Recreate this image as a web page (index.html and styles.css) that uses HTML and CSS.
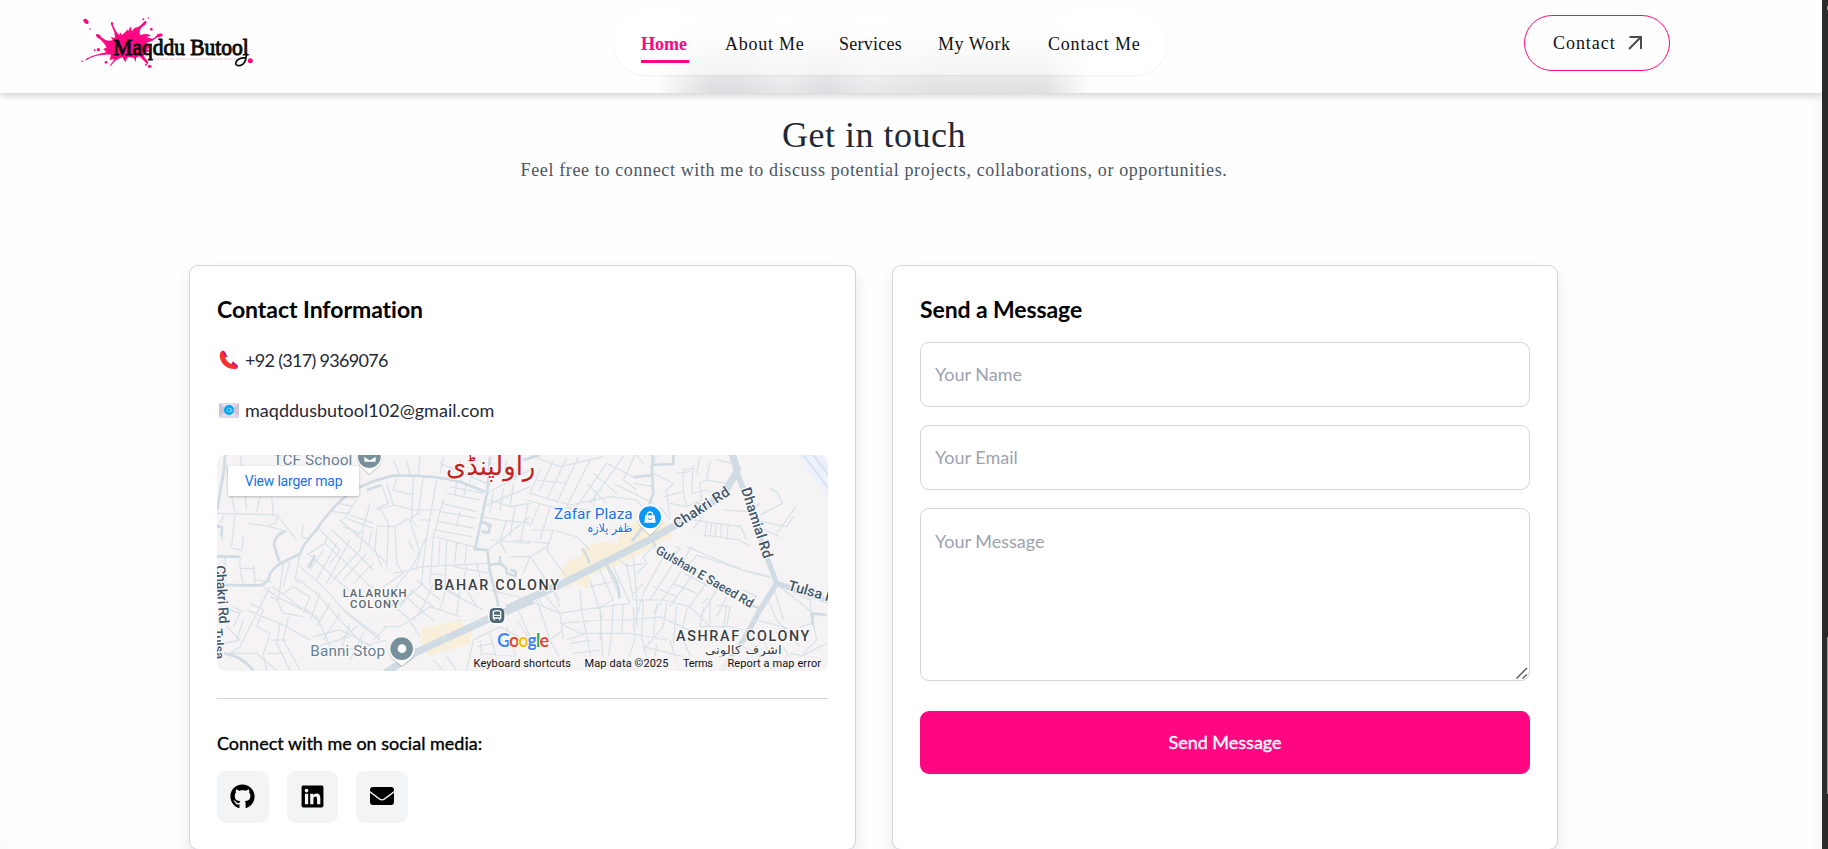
FILE: index.html
```html
<!DOCTYPE html>
<html lang="en">
<head>
<meta charset="utf-8">
<title>Maqddu Butool</title>
<link rel="stylesheet" href="styles.css">
</head>
<body>
<div class="window">
<div class="page">
  <header class="header">
    <a class="logo" href="#">
      <svg width="180" height="60" viewBox="0 0 540 180">
        <g transform="translate(-60 -40)">
          <g fill="#ff0782">
            <path d="M110 103 Q118 101 123 111 Q140 128 158 121 L152 112 L165 115 L163 98 L155 78 Q150 68 156 67 Q161 68 159 77 L170 98 L178 106 L180 98 L186 106 L198 95 L205 88 L203 98 L212 80 L215 95 L225 84 Q240 82 252 66 Q259 61 260 68 Q258 75 246 82 Q234 95 241 106 Q263 99 273 108 L258 112 L276 117 Q285 116 292 104 Q302 99 309 105 Q307 112 292 113 Q279 125 258 130 L276 138 L260 150 L277 151 L255 160 Q245 166 263 185 Q268 192 261 193 Q248 180 238 170 L228 174 L228 188 L221 174 L203 172 L196 188 L187 173 Q166 178 152 200 L150 197 L164 178 L149 181 L153 165 Q105 163 76 183 Q76 176 96 169 Q122 161 139 158 L130 148 L140 143 Q126 120 113 114 Q105 108 110 103Z"/>
            <ellipse cx="78" cy="65" rx="9" ry="6" transform="rotate(45 78 65)"/>
            <circle cx="90" cy="88" r="2.5"/><circle cx="115" cy="150" r="5"/><circle cx="104" cy="152" r="3"/>
            <circle cx="66" cy="185" r="2.5"/><circle cx="138" cy="188" r="4"/><circle cx="269" cy="200" r="5"/>
            <circle cx="258" cy="195" r="3"/><circle cx="250" cy="59" r="3"/><circle cx="265" cy="55" r="2"/>
            <circle cx="274" cy="89" r="4"/><circle cx="571" cy="183" r="7.500"/>
          </g>
          <path d="M272 178H525" stroke="#e2a6bd" stroke-width="2" stroke-dasharray="14 4 8 3"/>
          <text class="logo-text" x="160" y="165" textLength="406" lengthAdjust="spacingAndGlyphs">Maqddu Butool</text>
          <path d="M559 160V168Q557 194 540 198Q524 199 528 187Q536 172 559 175" fill="none" stroke="#0b0b0b" stroke-width="5"/>
        </g>
      </svg>
    </a>
    <nav class="nav">
      <a class="nav-link active" href="#">Home</a>
      <a class="nav-link about" href="#">About Me</a>
      <a class="nav-link services" href="#">Services</a>
      <a class="nav-link work" href="#">My Work</a>
      <a class="nav-link contact" href="#">Contact Me</a>
    </nav>
    <a class="contact-btn" href="#"><span>Contact</span>
      <svg width="14" height="14" viewBox="0 0 14 14" fill="none" stroke="#4b4b4b" stroke-width="2"><path d="M1.500 1H13V13M13 1L1 13"/></svg>
    </a>
  </header>

  <main class="main">
    <h1 class="title">Get in touch</h1>
    <p class="subtitle">Feel free to connect with me to discuss potential projects, collaborations, or opportunities.</p>

    <div class="cards">
      <section class="card">
        <h2 class="card-title info-title">Contact Information</h2>
        <p class="row phone">
          <svg width="20" height="20" viewBox="0 0 20 20"><path d="M1 3Q3 0 5 1L8 6 6 8Q8 12 12 14L14 12 19 16Q19 19 16 19Q8 19 4 14Q0 9 1 3Z" fill="#f8312f"/><path d="M3 1 5 1 8 6 7 7.500ZM14 11.500 19 16 18 17.500 12.700 13Z" fill="#ca0b7e"/></svg>
          <span>+92 (317) 9369076</span>
        </p>
        <p class="row email">
          <svg width="20" height="20" viewBox="0 0 20 20"><rect y="3" width="20" height="15" rx="1" fill="#e1d8ec"/><path d="M0 4 7 10.500 0 17ZM20 4 13 10.500 20 17Z" fill="#cdc4d6"/><path d="M0 4 10 13 20 4" fill="none" stroke="#b4acbc" stroke-width=".8"/><circle cx="10" cy="10" r="5" fill="#00a6ed"/><circle cx="10" cy="10" r="2" fill="none" stroke="#9fe0fa" stroke-width=".8"/><path d="M12 8V11Q13 12 14 10" fill="none" stroke="#9fe0fa" stroke-width=".7"/></svg>
          <span>maqddusbutool102@gmail.com</span>
        </p>

        <div class="map">
        <svg width="611" height="216" viewBox="0 0 611 216">
          <rect width="611" height="216" fill="#f5f3f4"/>
          <!-- western half -->
          <g transform="translate(-17 -15) scale(.33333)">
            <path d="M662 565L690 560 780 538 792 560 818 572 810 610 780 620 690 648 664 610Z" fill="#f7efda"/>
            <g class="lane">
              <path d="M80 75L95 170 105 215M120 45L140 210M50 220L230 225 290 300M75 220L60 250M145 250L210 260 260 275M95 325L125 330 130 290M105 220L95 320M50 350H120V385H165M75 350V430M120 385L130 430M160 375L165 430M50 260L68 262 66 300M165 420L215 425M250 370L235 480 210 470M300 340L285 420 300 430M270 365L250 440"/>
              <path d="M180 170L170 215M215 170L220 225M235 225L225 250 205 255M310 255L305 290 330 300M355 265L380 290 375 310 320 345M380 290L420 330 390 370M395 270L460 330 520 390M420 240L500 310 560 370M375 310L450 380 500 430 545 465M330 345L400 410 470 470M300 380L370 440 440 520 540 600M290 415L350 460 420 540 500 625M345 350L320 385M370 330L330 390M410 310L350 420M450 300L380 430M480 330L400 420M500 340L430 420M520 370L460 430M440 235L520 265M430 260L480 280M450 225L520 250M510 190L490 265 470 290M530 265L525 330 545 380M490 270L480 330M540 205L565 250 560 390M530 210L585 195M530 258L585 260 625 235M585 260L590 370 610 400 550 440M515 270L505 320M470 180L430 240M395 215L450 220M415 190L460 200"/>
              <path d="M545 135L565 190 530 205M560 130L580 195M590 110L580 150 640 165M640 110L635 240M670 110L655 220 625 240M710 120L680 290 640 375 590 440 560 480M730 180L700 290 860 330M725 190L830 215M740 160L840 180M750 140L850 160M770 120L765 170M725 215L830 235M715 245L825 265M705 270L815 290M800 130L790 175M780 215L770 260M630 240L660 340 650 380M625 300L640 330M680 290L670 370 665 430M700 290L690 430M720 300L715 375M740 300L735 440M770 305L765 370M800 315L795 370M580 400L670 380 870 370M660 240L690 240M585 195L640 210 720 210M635 240L650 260M865 330L990 230M840 230L900 240 990 250M860 250L870 275M870 300L990 310M895 300L920 340M920 240L900 300M945 200L930 290M985 190L960 310M850 200L990 140M860 160L990 90M870 180L930 200 990 190M880 155L870 220M910 145L900 210M940 130L930 200M880 70L865 145M920 60L910 110M960 50L945 120M720 70L860 130M730 50L720 100M780 60L770 110M820 60L810 130M620 60L630 105M660 50L655 105M580 60L600 105"/>
              <path d="M210 440L180 500 120 620 90 640M190 440L230 470 350 530 400 640M140 510L240 550 330 600M130 540L110 600M150 490L190 510 170 560 210 580 190 640 200 692M215 440L260 470 310 510M250 460L280 440 330 470M230 480L250 520 310 530M240 550L230 610 270 692M265 530L250 600 300 690M310 500L350 540M330 470L310 520M360 460L330 540M390 490L350 560M420 520L370 600M450 550L420 640M490 580L450 660M340 590L420 570 520 620M350 620L450 590M400 640L560 600M550 560L600 560 690 500 780 530M520 600L560 560M560 480L620 530 660 590M590 440L650 500 700 540M560 500L600 490 670 430M630 450L700 500M650 420L720 480M640 450L600 500M700 430L670 500 640 540M740 440L720 510M735 450L850 510M780 450L770 520M760 380L870 400M690 400L735 405M800 370L790 430M830 370L850 450M430 510L540 590M420 600L470 560M100 500L130 515M60 500L120 520 100 560M80 560L120 600 70 610M210 600L260 600M200 640L250 640M90 640L170 640 230 692M800 692L820 600 900 560M840 600L850 692M870 580L890 660M920 560L960 692M950 540L990 600M900 560L970 600M700 660L730 692M740 650L770 692M730 440L780 470M800 450L830 500M870 450L990 480M850 640L950 650M830 620L880 610"/>
            </g>
            <g class="street">
              <path d="M75 45L72 90 60 160 52 210M855 155L780 125Q690 103 580 107Q480 130 430 175 385 215 345 275 310 310 300 342Q240 370 230 378 205 400 207 415 195 436 175 436L75 435M255 275Q224 283 222 315L238 365M862 155L825 328 862 330 870 395 896 500M50 258L66 262 64 290M50 350H118M345 345L328 382M868 375L900 370 920 385 920 400 945 408M900 348V372M845 245L872 255 866 278 845 275M72 640Q130 650 160 692M870 50L862 155M545 135L500 150"/>
            </g>
            <path d="M555 700L650 636L880 530L1000 480" class="highway" />
          </g>
          <!-- eastern half -->
          <g transform="translate(293 -15) scale(.33333)">
            <path d="M147 400L180 358 212 350 218 325 275 305 320 310 335 275 400 220 450 240 478 258 485 295 440 310 400 335 310 380 240 405 235 445 190 430 170 447Z" fill="#f7efda"/>
            <path d="M858 40L960 178V40Z" fill="#edf1fb"/><path d="M905 40L960 110M880 45L960 150" stroke="#d5def2" stroke-width="5"/><path d="M930 40H960V80Z" fill="#f5f3f4"/>
            <g class="lane">
              <path d="M60 45L150 80 280 50M90 90L60 160M130 60L90 150M170 55L110 180M205 50L140 190M240 60L170 200M290 70L200 200M340 50L240 190M60 160L180 195 300 170M80 120L170 130M50 180L120 200 90 300M90 190L60 260M120 200L240 210M130 270L200 290 240 330M60 270L130 270 110 330M230 130L290 190M250 100L320 160M290 70L370 110M310 130L430 190M260 150L250 200M300 170L380 180 410 215M380 45L400 70M430 140L370 130M375 45L340 120 380 150M380 110L420 105M440 45L430 75M430 100L490 130 460 160M460 170L520 155 530 200 480 190M450 200L480 240M470 155L480 235M520 155L520 90 550 85M550 75L545 160 590 150M570 50L560 100M600 65L590 120 650 130M500 100L540 95M620 60L670 70M590 120L570 130 575 180 530 200M580 150L640 165M600 190L560 190 570 230"/>
              <path d="M550 240L690 260M590 245L585 290M605 250L600 285M620 250L615 290M635 250L632 292M655 255L650 300M580 285L690 300 720 320M690 255L710 300M550 265L580 230M640 210L720 215 750 190M700 180L740 200M780 145L800 155 818 190 750 225M730 240L830 260M740 260L810 290M858 200L800 280M850 230L830 260M530 320L600 350 700 390 780 410M560 345L730 400 780 412M560 345L530 385 570 400M545 320L515 370M495 320L510 325 490 350 430 320M430 320L400 350 410 370 380 400M460 350L400 460 370 560M490 370L420 480M520 385L430 520M550 400L480 500M590 430L530 510M620 450L570 530M650 470L620 530M520 400L600 440M370 350L380 480 380 560M350 370L370 480 460 480 540 500 600 560M330 360L350 380 400 370M310 380L360 490M270 390L310 480 270 500M240 420L275 530 270 600M290 380L330 470M240 440L330 420M210 450L215 510 250 692M150 520L210 510 360 490M150 550L280 540 370 540 450 530 560 580M210 580L360 580 470 600M270 500L280 690M310 490L305 580 290 692M340 490L335 580M370 500L375 600 340 692M400 480L395 590 420 692M440 490L430 590M470 490L460 560 400 630M500 500L490 610M530 510L510 600M400 430L370 460M430 440L500 470M490 430L560 460M80 460L100 500M50 480L150 520M100 460L150 520 160 600M20 500L60 590M80 480L120 600 170 692M130 450L150 500M60 350L150 480M110 330L170 410M10 300L120 310M0 350L60 350 110 320M60 350L40 400M580 490L590 475 600 480V550M620 500L630 495 660 500 650 560M650 495L640 570M580 500L570 560 660 560 700 570M700 450L740 470 720 500M770 470L800 540 870 620M790 440L820 540M810 440L910 520 910 550M840 450L900 480M740 540L850 570M900 450L905 550M910 520L950 525M870 560L910 550 920 600 880 640M760 600L800 692M870 650L950 610M820 620L860 692M840 640L950 660M700 620L760 650M400 620L560 660M440 610L430 692M480 600L510 692M520 600L560 692M170 600L230 580M160 570L120 600M150 550L210 580M180 610L250 600M190 640L270 630"/>
            </g>
            <g class="street"><path d="M428 45V75L490 72V45M425 75L430 160 415 200M370 112L428 105M215 325Q230 340 238 370M290 375Q330 430 328 475M365 305L400 260M700 490L750 505M0 390Q25 390 15 410M910 555L905 520 950 525M430 300L435 320M40 60L90 45" /></g>
            <path d="M678 90L720 200 770 350 800 430 750 510 700 600 630 700M800 430L960 485" class="highway side"/>
            <path d="M-10 506L150 434 410 304 480 265Q620 190 650 145 690 85 680 85L665 35" class="highway"/>
          </g>
          <path d="M0 165.500H611M227.500 0V216" stroke="#e9ecee" stroke-width=".5"/>

          <g class="place" transform="translate(-17 -15) scale(.33333)">
            <text x="220" y="75" textLength="237" font-size="46">TCF School</text>
            <text x="331" y="648" textLength="224" font-size="46">Banni Stop</text>
            <text class="city" x="738" y="105" textLength="268" lengthAdjust="spacingAndGlyphs" font-size="82">راولپنڈی</text>
            <text class="district" x="702" y="450" textLength="375" font-size="43">BAHAR COLONY</text>
            <text class="district small" x="428" y="471" textLength="192" font-size="34">LALARUKH</text>
            <text class="district small" x="450" y="504" textLength="147" font-size="34">COLONY</text>
            <text class="road" transform="translate(46 377) rotate(86)" textLength="175" font-size="42">Chakri Rd</text>
            <text class="road" transform="translate(40 566) rotate(86)" font-size="38">Tulsa</text>
            <path d="M472 52a36 36 0 0 0 14 31L508 103 530 83a36 36 0 0 0 15-31z" class="pin"/>
            <circle cx="508" cy="50" r="34" fill="#78909c"/>
            <path d="M493 50V65H527V50L509 61Z" fill="#fff"/><path d="M496 51L509 59 525 50" fill="none" stroke="#78909c" stroke-width="3"/>
            <path d="M605 588a40 40 0 0 0-27 68L606 678 633 656a40 40 0 0 0-28-68z" class="pin"/>
            <circle cx="605" cy="626" r="34" fill="#78909c"/><circle cx="606" cy="626" r="13" fill="#fff"/>
            <circle cx="891" cy="529" r="27" fill="#fff"/><rect x="869" y="504" width="44" height="45" rx="14" fill="#4f6878"/>
            <path d="M880 515Q891 509 902 515V534H880Z" fill="none" stroke="#fff" stroke-width="4"/><path d="M880 526H902M883 535V541M899 535V541" stroke="#fff" stroke-width="4"/>
          </g>
          <g class="place" transform="translate(293 -15) scale(.33333)">
            <text class="poi" x="132" y="237" textLength="236" font-size="46">Zafar Plaza</text>
            <text class="poi arabic" x="230" y="276" textLength="137" lengthAdjust="spacingAndGlyphs" font-size="36">ظفر پلازہ</text>
            <text class="district" x="498" y="602" textLength="400" font-size="43">ASHRAF COLONY</text>
            <text class="district arabic" x="585" y="641" textLength="230" lengthAdjust="spacingAndGlyphs" font-size="36">اشرف کالونی</text>
            <text class="road" transform="translate(502 267) rotate(-33)" textLength="191" font-size="43">Chakri Rd</text>
            <text class="road" transform="translate(693 148) rotate(72)" textLength="220" font-size="43">Dhamial Rd</text>
            <text class="road" transform="translate(434 338) rotate(30)" textLength="332" font-size="38">Gulshan E Saeed Rd</text>
            <text class="road" transform="translate(832 449) rotate(16)" font-size="43">Tulsa Rd</text>
            <path d="M420 193a39 39 0 0 0-28 66L420 285 448 259a39 39 0 0 0-28-66z" class="pin"/>
            <circle cx="420" cy="232" r="33" fill="#0b98f5"/>
            <path d="M406 226H434L437 248H403Z" fill="#fff"/><path d="M412 226V221Q420 211 428 221V226" fill="none" stroke="#fff" stroke-width="4"/><path d="M413 235Q420 243 427 235" fill="none" stroke="#0b98f5" stroke-width="3"/>
          </g>
          <rect x="254" y="201" width="357" height="15" fill="#f5f3f4" opacity=".75"/>
          <text class="google" x="280" y="191.500" textLength="52"><tspan fill="#4285f4">G</tspan><tspan fill="#ea4335">o</tspan><tspan fill="#fbbc04">o</tspan><tspan fill="#4285f4">g</tspan><tspan fill="#34a853">l</tspan><tspan fill="#ea4335">e</tspan></text>
          <g class="legal">
            <text x="256.500" y="212" textLength="97.500">Keyboard shortcuts</text>
            <text x="367.500" y="212" textLength="84">Map data ©2025</text>
            <text x="466" y="212" textLength="30">Terms</text>
            <text x="510.500" y="212" textLength="93.500">Report a map error</text>
          </g>
        </svg>
        <a class="larger" href="#">View larger map</a>
        </div>

        <hr class="rule">
        <h3 class="social-title">Connect with me on social media:</h3>
        <div class="socials">
          <a class="social" href="#" aria-label="GitHub"><svg width="25" height="25" viewBox="0 0 496 512"><path d="M165.900 397.400c0 2-2.300 3.600-5.200 3.600-3.300.3-5.600-1.300-5.600-3.600 0-2 2.300-3.600 5.200-3.600 3-.3 5.600 1.300 5.600 3.600zM244.800 8C106.100 8 0 113.300 0 252c0 110.900 69.800 205.800 169.500 239.200 12.800 2.300 17.300-5.600 17.300-12.100 0-6.200-.3-40.400-.3-61.400 0 0-70 15-84.700-29.800 0 0-11.400-29.100-27.800-36.600 0 0-22.900-15.700 1.600-15.400 0 0 24.900 2 38.600 25.800 21.900 38.600 58.600 27.500 72.900 20.900 2.300-16 8.800-27.100 16-33.700-55.900-6.200-112.300-14.300-112.300-110.500 0-27.500 7.600-41.300 23.600-58.900-2.600-6.500-11.100-33.300 2.600-67.900 20.900-6.500 69 27 69 27 20-5.600 41.500-8.500 62.800-8.500s42.800 2.900 62.800 8.500c0 0 48.100-33.600 69-27 13.700 34.700 5.200 61.400 2.600 67.900 16 17.700 25.800 31.500 25.800 58.900 0 96.500-58.900 104.200-114.800 110.500 9.200 7.900 17 22.900 17 46.400 0 33.700-.3 75.400-.3 83.600 0 6.500 4.600 14.400 17.300 12.100C428.200 457.800 496 362.900 496 252 496 113.300 383.500 8 244.800 8z"/></svg></a>
          <a class="social" href="#" aria-label="LinkedIn"><svg width="25" height="25" viewBox="0 0 448 512"><path d="M416 32H31.900C14.300 32 0 46.500 0 64.300v383.400C0 465.500 14.300 480 31.900 480H416c17.600 0 32-14.500 32-32.300V64.300c0-17.800-14.400-32.300-32-32.300zM135.400 416H69V202.200h66.500V416zm-33.200-243c-21.300 0-38.500-17.300-38.500-38.500S80.900 96 102.200 96c21.200 0 38.500 17.300 38.500 38.500 0 21.300-17.200 38.500-38.500 38.500zm282.100 243h-66.400V312c0-24.800-.5-56.700-34.500-56.700-34.600 0-39.900 27-39.900 54.900V416h-66.400V202.200h63.700v29.200h.9c8.900-16.800 30.600-34.500 62.900-34.500 67.200 0 79.700 44.300 79.700 101.900V416z"/></svg></a>
          <a class="social" href="#" aria-label="Email"><svg width="24" height="24" viewBox="0 0 24 24"><path d="M3 3H21Q24 3 24 6V7L14 14.500Q12 15.800 10 14.500L0 7V6Q0 3 3 3ZM0 8.700L9 15.600Q12 17.600 15 15.600L24 8.700V18Q24 21 21 21H3Q0 21 0 18Z"/></svg></a>
        </div>
      </section>

      <section class="card">
        <h2 class="card-title send-title">Send a Message</h2>
        <form class="form">
          <input class="field name" type="text" placeholder="Your Name">
          <input class="field mail" type="text" placeholder="Your Email">
          <div class="area">
            <textarea class="field message" placeholder="Your Message"></textarea>
            <svg class="grip" width="12" height="12" viewBox="0 0 12 12" stroke="#555" stroke-width="1.400"><path d="M.5 11.500L11 1M6.500 11.500L11 7.500"/></svg>
          </div>
          <button class="send" type="button">Send Message</button>
        </form>
      </section>
    </div>
  </main>
</div>
<div class="edge"></div>
</div>
</body>
</html>
```
FILE: styles.css
```css
* { box-sizing: border-box; }
body {
  margin: 0;
  height: 849px;
  overflow: hidden;
  background: #fefefe;
  font-family: Lato, "Open Sans", sans-serif;
  font-variant-ligatures: none;
}
a { color: inherit; text-decoration: none; }
h1, h2, h3, p { margin: 0; font-weight: 400; }

.window { display: flex; height: 849px; overflow: hidden; }
.page {
  width: 1822px;
  height: 849px;
  overflow: hidden;
  background:
    radial-gradient(circle at -30px 870px, #f6f6f6 0, #fefefe 58px, transparent 60px),
    linear-gradient(90deg, transparent 1808px, #f9f9f9 1822px);
}
.edge {
  width: 6px;
  background:
    linear-gradient(#9a9a9a, #9a9a9a) 5px 637px / 1px 157px no-repeat,
    linear-gradient(#aaa, #aaa) 5px 6px / 1px 4px no-repeat,
    #2b2b2b;
}

.header {
  display: flex;
  align-items: flex-start;
  width: 1822px;
  height: 93px;
  padding-left: 80px;
  background:
    linear-gradient(#fefefe 5px, rgba(254, 254, 254, .94) 35px, rgba(254, 254, 254, 0) 90px),
    linear-gradient(90deg, transparent 655px, #dcdde0 712px, #dcdde0 732px, #e8e9eb 785px, #dddee1 825px, #e9eaec 870px, #e1e2e4 930px, #e0e1e3 1045px, transparent 1092px),
    #fefefe;
  box-shadow: 0 2px 8px rgba(0, 0, 0, .2);
}
.logo { display: block; width: 180px; height: 60px; margin: 13px 354px 0 0; }
.logo svg { display: block; }
.logo-text { font: 70px "Liberation Serif", serif; fill: #0b0b0b; stroke: #0b0b0b; stroke-width: 3; }

.nav {
  display: flex;
  width: 553px;
  height: 63px;
  margin-top: 12px;
  padding: 15px 0 0 27px;
  gap: 36px;
  border-radius: 32px;
  background: rgba(255, 255, 255, .5);
  box-shadow: 0 1px 2px rgba(0, 0, 0, .06);
  font: 18px/34px "Liberation Serif", serif;
  color: #111;
  white-space: nowrap;
}
.nav-link { height: 36px; }
.active { width: 48px; font-weight: 700; color: #ff0782; border-bottom: 3px solid #ff0782; letter-spacing: 0; }
.about { width: 78px; letter-spacing: .75px; }
.services { width: 63px; letter-spacing: .25px; }
.work { width: 74px; letter-spacing: .55px; }
.contact { width: 95px; letter-spacing: .8px; }

.contact-btn {
  display: flex;
  align-items: center;
  justify-content: space-between;
  width: 146px;
  height: 56px;
  margin: 15px 0 0 357px;
  padding: 0 27px 0 28px;
  border: 1px solid #ff0782;
  border-radius: 28px;
  font: 18px "Liberation Serif", serif;
  letter-spacing: .95px;
  color: #111;
}

.main { width: 1748px; text-align: center; }
.title {
  margin-top: 22px;
  font: 36px/40px "Liberation Serif", serif;
  letter-spacing: .5px;
  color: #1f2937;
}
.subtitle {
  margin-top: 1px;
  font: 18px/28px "Liberation Serif", serif;
  letter-spacing: .63px;
  color: #4b5563;
}

.cards {
  display: grid;
  grid-template-columns: 667px 666px;
  gap: 36px;
  margin: 81px 0 0 189px;
  text-align: left;
}
.card {
  height: 585px;
  padding: 25px 27px;
  border: 1px solid #d1d5db;
  border-radius: 9px;
  background: #fff;
  box-shadow: 0 8px 16px rgba(0, 0, 0, .09);
}
.card-title { font-size: 23px; line-height: 36px; font-weight: 700; color: #000; }
.info-title { letter-spacing: -.05px; }
.send-title { letter-spacing: -.1px; }
.row {
  display: flex;
  align-items: center;
  gap: 6px;
  height: 32px;
  padding-left: 2px;
  font-size: 18px;
  color: #1f2937;
  white-space: nowrap;
}
.phone { margin-top: 17px; letter-spacing: -.7px; }
.email { margin-top: 18px; letter-spacing: .02px; }

.map {
  position: relative;
  width: 611px;
  height: 216px;
  margin-top: 29px;
  border-radius: 8px;
  overflow: hidden;
}
.map svg { display: block; }
.larger {
  position: absolute;
  left: 11px;
  top: 11px;
  width: 131px;
  height: 30px;
  border-radius: 2px;
  background: #fff;
  box-shadow: 0 1px 3px rgba(0, 0, 0, .25);
  font: 14px/30px Roboto, sans-serif;
  letter-spacing: -.2px;
  text-align: center;
  color: #1a73e8;
}
.lane { fill: none; stroke: #d7e1e8; stroke-width: 3.6; }
.street { fill: none; stroke: #d0dbe3; stroke-width: 8; stroke-linejoin: round; }
.highway { fill: none; stroke: #d0dbe3; stroke-width: 22; stroke-linejoin: round; }
.side { stroke-width: 16; }
.place { font-family: Roboto, "DejaVu Sans", sans-serif; fill: #668091; }
.place text { paint-order: stroke; stroke: #fbfafa; stroke-width: 7; stroke-linejoin: round; }
.place .city { fill: #c5221f; font-family: "DejaVu Sans", sans-serif; }
.place .arabic { font-family: "DejaVu Sans", sans-serif; }
.place .district { fill: #3c4043; font-weight: 500; }
.place .small { fill: #5c666d; }
.place .road { fill: #42566a; font-weight: 500; }
.place .poi { fill: #1a73e8; }
.pin { fill: #fff; filter: drop-shadow(0 2px 2px rgba(0, 0, 0, .3)); }
.google { font: 700 18px Lato, sans-serif; paint-order: stroke; stroke: #fff; stroke-width: 2; }
.legal { font: 11px Roboto, sans-serif; fill: #111; }

.rule { height: 1px; margin: 27px 0 0; border: 0; background: #d1d5db; }
.social-title {
  margin-top: 30px;
  font-size: 18px;
  line-height: 28px;
  color: #000;
  -webkit-text-stroke: .35px #000;
}
.socials { display: flex; gap: 18px; margin-top: 14px; }
.social {
  display: flex;
  align-items: center;
  justify-content: center;
  width: 51.5px;
  height: 52px;
  padding-bottom: 2px;
  border-radius: 9px;
  background: #f3f4f6;
}

.form { display: flex; flex-direction: column; margin-top: 15px; }
.field {
  display: block;
  width: 610px;
  height: 65px;
  margin: 0 0 18px;
  padding: 0 14px 1px;
  border: 1px solid #d1d5db;
  border-radius: 9px;
  background: #fff;
  font: 18px/28px Lato, sans-serif;
  outline: 0;
}
.field::placeholder { color: #9ca3af; opacity: 1; }
.area { position: relative; width: 610px; height: 173px; }
.message { height: 173px; margin: 0; padding: 18px 14px; resize: none; }
.grip { position: absolute; right: 2px; bottom: 2px; }
.send {
  width: 610px;
  height: 63px;
  margin-top: 30px;
  padding-bottom: 2px;
  border: 0;
  border-radius: 9px;
  background: #ff0782;
  color: #fff;
  font: 18px Lato, sans-serif;
  -webkit-text-stroke: .35px #fff;
}
```
